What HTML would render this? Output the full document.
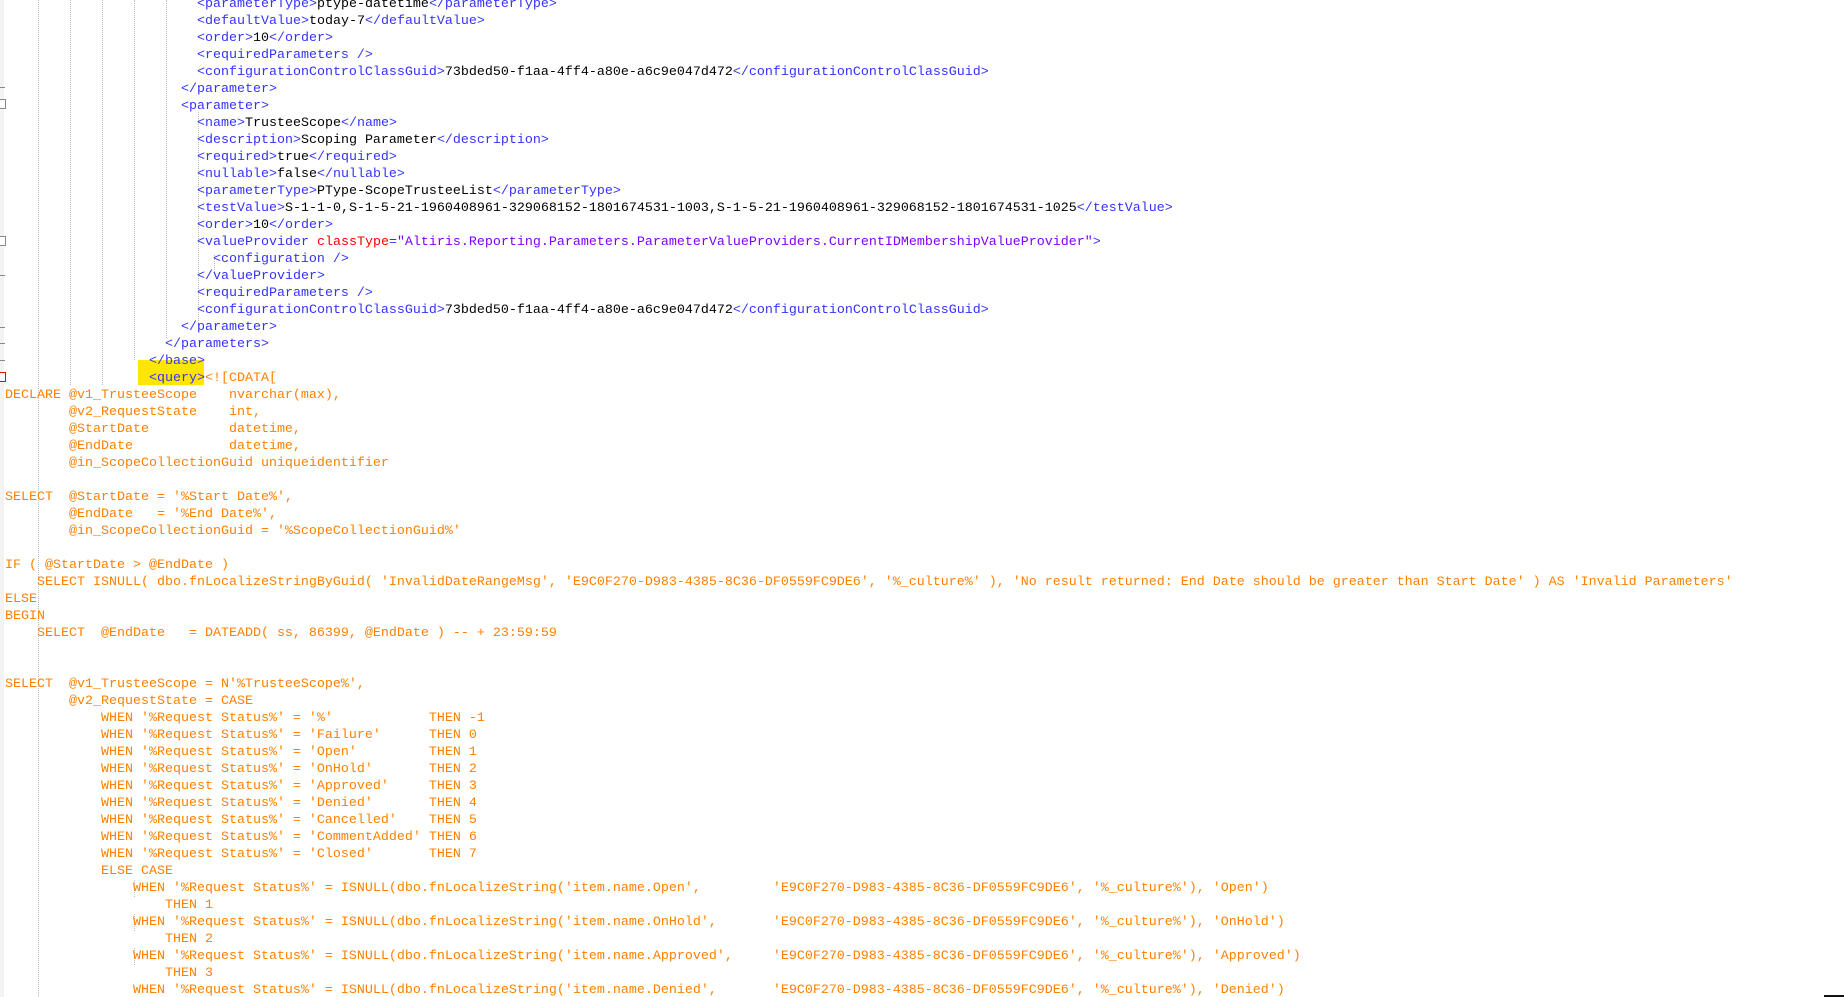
<!DOCTYPE html>
<html><head><meta charset="utf-8"><style>
html,body{margin:0;padding:0;background:#fff;width:1844px;height:997px;overflow:hidden;position:relative}
.code{position:absolute;left:5px;top:-4px;margin:0;font-family:"Liberation Mono",monospace;font-size:13.33px;line-height:17px;color:#000;white-space:normal;z-index:2}
.code div{height:17px;overflow:visible;white-space:pre}
.t{color:#3333ff}.a{color:#ff0000}.v{color:#8000ff}.s{color:#ff8000}
.g{position:absolute;width:0;border-left:1px dotted #c0c0c0;z-index:1}
.gut{position:absolute;left:0;top:0;width:4px;height:997px;background:#f3f3f3}
.f{position:absolute;left:0;width:5px;height:0;border-top:1px solid #888}
.fb{position:absolute;left:-2px;width:6px;height:8px;border:1px solid #888;background:#fff}
</style></head><body>
<div class="gut"></div>
<div class="f" style="top:87px"></div>
<div class="fb" style="top:99px"></div>
<div class="fb" style="top:236px"></div>
<div class="f" style="top:275px"></div>
<div class="f" style="top:327px"></div>
<div class="f" style="top:343px"></div>
<div class="f" style="top:360px"></div>
<div class="fb" style="top:372px;border-color:#e00"></div>
<div class="g" style="left:38px;top:0;height:997px"></div>
<div class="g" style="left:70px;top:0;height:385px"></div>
<div class="g" style="left:102px;top:0;height:385px"></div>
<div class="g" style="left:134px;top:0;height:360px"></div>
<div class="g" style="left:166px;top:0;height:338px"></div>
<div class="g" style="left:198px;top:112px;height:213px"></div>
<div class="g" style="left:214px;top:255px;height:17px"></div>
<div class="g" style="left:134px;top:880px;height:17px"></div>
<div class="g" style="left:134px;top:914px;height:17px"></div>
<div class="g" style="left:134px;top:948px;height:17px"></div>
<div style="position:absolute;left:138px;top:360px;width:66px;height:25px;background:#ffe600;z-index:1"></div>
<div style="position:absolute;left:1824px;top:995px;width:20px;height:2px;background:#111"></div>
<div class="code"><div>                        <span class="t">&lt;parameterType&gt;</span>ptype-datetime<span class="t">&lt;/parameterType&gt;</span></div><div>                        <span class="t">&lt;defaultValue&gt;</span>today-7<span class="t">&lt;/defaultValue&gt;</span></div><div>                        <span class="t">&lt;order&gt;</span>10<span class="t">&lt;/order&gt;</span></div><div>                        <span class="t">&lt;requiredParameters /&gt;</span></div><div>                        <span class="t">&lt;configurationControlClassGuid&gt;</span>73bded50-f1aa-4ff4-a80e-a6c9e047d472<span class="t">&lt;/configurationControlClassGuid&gt;</span></div><div>                      <span class="t">&lt;/parameter&gt;</span></div><div>                      <span class="t">&lt;parameter&gt;</span></div><div>                        <span class="t">&lt;name&gt;</span>TrusteeScope<span class="t">&lt;/name&gt;</span></div><div>                        <span class="t">&lt;description&gt;</span>Scoping Parameter<span class="t">&lt;/description&gt;</span></div><div>                        <span class="t">&lt;required&gt;</span>true<span class="t">&lt;/required&gt;</span></div><div>                        <span class="t">&lt;nullable&gt;</span>false<span class="t">&lt;/nullable&gt;</span></div><div>                        <span class="t">&lt;parameterType&gt;</span>PType-ScopeTrusteeList<span class="t">&lt;/parameterType&gt;</span></div><div>                        <span class="t">&lt;testValue&gt;</span>S-1-1-0,S-1-5-21-1960408961-329068152-1801674531-1003,S-1-5-21-1960408961-329068152-1801674531-1025<span class="t">&lt;/testValue&gt;</span></div><div>                        <span class="t">&lt;order&gt;</span>10<span class="t">&lt;/order&gt;</span></div><div>                        <span class="t">&lt;valueProvider </span><span class="a">classType</span><span class="t">=</span><span class="v">"Altiris.Reporting.Parameters.ParameterValueProviders.CurrentIDMembershipValueProvider"</span><span class="t">&gt;</span></div><div>                          <span class="t">&lt;configuration /&gt;</span></div><div>                        <span class="t">&lt;/valueProvider&gt;</span></div><div>                        <span class="t">&lt;requiredParameters /&gt;</span></div><div>                        <span class="t">&lt;configurationControlClassGuid&gt;</span>73bded50-f1aa-4ff4-a80e-a6c9e047d472<span class="t">&lt;/configurationControlClassGuid&gt;</span></div><div>                      <span class="t">&lt;/parameter&gt;</span></div><div>                    <span class="t">&lt;/parameters&gt;</span></div><div>                  <span class="t">&lt;/base&gt;</span></div><div>                  <span class="t">&lt;query&gt;</span><span class="s">&lt;![CDATA[</span></div><div class="s">DECLARE @v1_TrusteeScope    nvarchar(max),</div><div class="s">        @v2_RequestState    int,</div><div class="s">        @StartDate          datetime,</div><div class="s">        @EndDate            datetime,</div><div class="s">        @in_ScopeCollectionGuid uniqueidentifier</div><div class="s"> </div><div class="s">SELECT  @StartDate = '%Start Date%',</div><div class="s">        @EndDate   = '%End Date%',</div><div class="s">        @in_ScopeCollectionGuid = '%ScopeCollectionGuid%'</div><div class="s"> </div><div class="s">IF ( @StartDate &gt; @EndDate )</div><div class="s">    SELECT ISNULL( dbo.fnLocalizeStringByGuid( 'InvalidDateRangeMsg', 'E9C0F270-D983-4385-8C36-DF0559FC9DE6', '%_culture%' ), 'No result returned: End Date should be greater than Start Date' ) AS 'Invalid Parameters'</div><div class="s">ELSE</div><div class="s">BEGIN</div><div class="s">    SELECT  @EndDate   = DATEADD( ss, 86399, @EndDate ) -- + 23:59:59</div><div class="s"> </div><div class="s"> </div><div class="s">SELECT  @v1_TrusteeScope = N'%TrusteeScope%',</div><div class="s">        @v2_RequestState = CASE</div><div class="s">            WHEN '%Request Status%' = '%'            THEN -1</div><div class="s">            WHEN '%Request Status%' = 'Failure'      THEN 0</div><div class="s">            WHEN '%Request Status%' = 'Open'         THEN 1</div><div class="s">            WHEN '%Request Status%' = 'OnHold'       THEN 2</div><div class="s">            WHEN '%Request Status%' = 'Approved'     THEN 3</div><div class="s">            WHEN '%Request Status%' = 'Denied'       THEN 4</div><div class="s">            WHEN '%Request Status%' = 'Cancelled'    THEN 5</div><div class="s">            WHEN '%Request Status%' = 'CommentAdded' THEN 6</div><div class="s">            WHEN '%Request Status%' = 'Closed'       THEN 7</div><div class="s">            ELSE CASE</div><div class="s">                WHEN '%Request Status%' = ISNULL(dbo.fnLocalizeString('item.name.Open',         'E9C0F270-D983-4385-8C36-DF0559FC9DE6', '%_culture%'), 'Open')</div><div class="s">                    THEN 1</div><div class="s">                WHEN '%Request Status%' = ISNULL(dbo.fnLocalizeString('item.name.OnHold',       'E9C0F270-D983-4385-8C36-DF0559FC9DE6', '%_culture%'), 'OnHold')</div><div class="s">                    THEN 2</div><div class="s">                WHEN '%Request Status%' = ISNULL(dbo.fnLocalizeString('item.name.Approved',     'E9C0F270-D983-4385-8C36-DF0559FC9DE6', '%_culture%'), 'Approved')</div><div class="s">                    THEN 3</div><div class="s">                WHEN '%Request Status%' = ISNULL(dbo.fnLocalizeString('item.name.Denied',       'E9C0F270-D983-4385-8C36-DF0559FC9DE6', '%_culture%'), 'Denied')</div></div>
</body></html>
